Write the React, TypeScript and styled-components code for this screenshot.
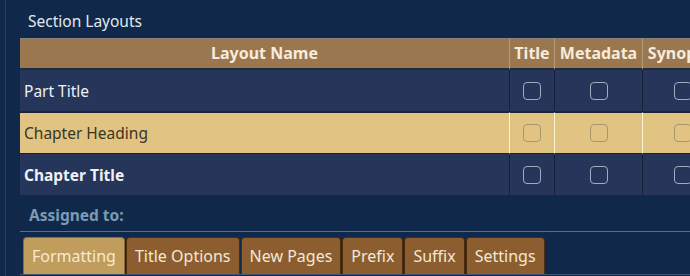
import React from 'react';
import styled, { createGlobalStyle } from 'styled-components';

const GlobalStyle = createGlobalStyle`
  html, body {
    margin: 0;
    padding: 0;
    background: #10294a;
    overflow: hidden;
  }
  body {
    font-family: 'Noto Sans', 'Open Sans', sans-serif;
  }
`;

const Page = styled.div`
  width: 685px;
  height: 276px;
  margin-left: 5px;
  padding-left: 14px;
  box-sizing: border-box;
  background: #10294a;
  border-left: 1px solid #243f61;
  display: flex;
  flex-direction: column;
`;

const Heading = styled.div`
  height: 38px;
  display: flex;
  align-items: center;
  padding-left: 8px;
  padding-top: 3px;
  box-sizing: border-box;
  font-size: 15.5px;
  color: #e3e8ef;
`;

const Grid = styled.div`
  display: grid;
  grid-template-columns: 490px 45px 88px 80px;
  width: 671px;
  overflow: hidden;
`;

const HeadCell = styled.div`
  height: 32px;
  box-sizing: border-box;
  background: #9b7750;
  border-top: 1px solid #8a8378;
  border-bottom: 2px solid #1f2a3c;
  border-right: 1px solid #b59a78;
  display: flex;
  align-items: center;
  justify-content: center;
  font-size: 16px;
  font-weight: 700;
  color: #f6ecdc;
  white-space: nowrap;
  padding-bottom: 1px;
`;

const Cell = styled.div<{ $selected?: boolean; $name?: boolean; $bold?: boolean }>`
  height: 42px;
  box-sizing: border-box;
  background: ${p => (p.$selected ? '#e2c482' : '#26355a')};
  border-bottom: 1px solid ${p => (p.$selected ? '#1b2236' : '#1a2641')};
  border-top: ${p => (p.$selected ? '1px solid #1b2236' : 'none')};
  border-right: 1px solid ${p => (p.$selected ? '#fff4d6' : '#17223a')};
  display: flex;
  align-items: center;
  justify-content: ${p => (p.$name ? 'flex-start' : 'center')};
  padding-left: ${p => (p.$name ? '4px' : '0')};
  font-size: 15.5px;
  font-weight: ${p => (p.$bold ? 700 : 400)};
  color: ${p => (p.$selected ? '#3b3424' : '#eef1f6')};
`;

const Check = styled.span<{ $selected?: boolean }>`
  width: 18px;
  height: 18px;
  box-sizing: border-box;
  border-radius: 4px;
  border: 1.5px solid ${p => (p.$selected ? '#a99670' : '#a3acbd')};
  display: inline-block;
`;

const Assigned = styled.div`
  height: 36px;
  display: flex;
  align-items: center;
  padding-left: 9px;
  padding-top: 3px;
  box-sizing: border-box;
  font-size: 15.5px;
  font-weight: 700;
  color: #7d9ab5;
  border-bottom: 1px solid #5a6f86;
`;

const TabStrip = styled.div`
  display: flex;
  align-items: flex-end;
  padding-left: 3px;
  padding-top: 5px;
  height: 43px;
  box-sizing: border-box;
  border-bottom: 1px solid #3b5573;
`;

const Tab = styled.div<{ $active?: boolean }>`
  height: 37px;
  box-sizing: border-box;
  padding: 0 8px;
  display: flex;
  align-items: center;
  font-size: 16px;
  background: ${p => (p.$active ? '#c09c5d' : '#8c5e2f')};
  color: ${p => (p.$active ? '#f5ead4' : '#f2e8da')};
  border: 1px solid ${p => (p.$active ? '#8a6a3c' : '#4b2e12')};
  border-bottom: none;
  border-radius: 4px 4px 0 0;
  margin-right: 1px;
`;

const rows = [
  { name: 'Part Title' },
  { name: 'Chapter Heading', selected: true },
  { name: 'Chapter Title', bold: true },
];

const tabs = ['Formatting', 'Title Options', 'New Pages', 'Prefix', 'Suffix', 'Settings'];

export default function App() {
  return (
    <>
      <GlobalStyle />
      <Page>
        <Heading>Section Layouts</Heading>
        <Grid>
          <HeadCell>Layout Name</HeadCell>
          <HeadCell>Title</HeadCell>
          <HeadCell>Metadata</HeadCell>
          <HeadCell>Synopsis</HeadCell>
          {rows.map(r => (
            <React.Fragment key={r.name}>
              <Cell $name $selected={r.selected} $bold={r.bold}>{r.name}</Cell>
              <Cell $selected={r.selected}><Check $selected={r.selected} /></Cell>
              <Cell $selected={r.selected}><Check $selected={r.selected} /></Cell>
              <Cell $selected={r.selected}><Check $selected={r.selected} /></Cell>
            </React.Fragment>
          ))}
        </Grid>
        <Assigned>Assigned to:</Assigned>
        <TabStrip>
          {tabs.map((t, i) => (
            <Tab key={t} $active={i === 0}>{t}</Tab>
          ))}
        </TabStrip>
      </Page>
    </>
  );
}
